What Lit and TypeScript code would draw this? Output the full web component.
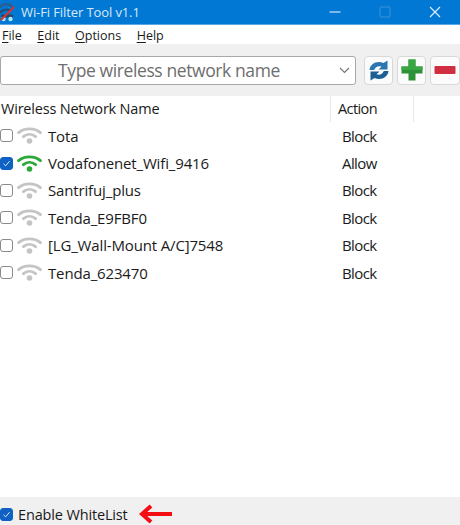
import { LitElement, html, css, svg } from "lit";
import { customElement } from "lit/decorators.js";

const wifi = (color: string) => svg`<svg class="wifi" width="25" height="17" viewBox="0 0 25 17" fill="none" stroke="${color}" stroke-linecap="round">
  <path d="M1.6 5.6C7.5 0.6 17.5 0.6 23.4 5.6" stroke-width="2.9"/>
  <path d="M6.4 9.6C10 6.6 15 6.6 18.6 9.6" stroke-width="2.9"/>
  <circle cx="12.5" cy="14" r="2.8" fill="${color}" stroke="none"/>
</svg>`;

const rows = [
  ["Tota", "Block", false],
  ["Vodafonenet_Wifi_9416", "Allow", true],
  ["Santrifuj_plus", "Block", false],
  ["Tenda_E9FBF0", "Block", false],
  ["[LG_Wall-Mount A/C]7548", "Block", false],
  ["Tenda_623470", "Block", false],
] as const;

@customElement("app-root")
export class AppRoot extends LitElement {
  static styles = css`
    :host { display: flex; flex-direction: column; width: 460px; height: 525px; font-family: "Open Sans", "Noto Sans", sans-serif; font-size: 14px; color: #1a1a1a; background: #fff; overflow: hidden; letter-spacing: -0.2px; }
    .title { height: 25px; box-sizing: border-box; flex: none; background: #0078d4; color: #d8e9f7; display: flex; align-items: center; font-size: 13px; border-bottom: 1px solid #5ba7e3; letter-spacing: -0.1px; }
    .logo { margin: 0 6px 0 0; flex: none; }
    .title .name { flex: 1; }
    .winbtn { width: 50px; display: flex; justify-content: center; flex: none; }
    .menu { height: 19px; padding-top: 1px; box-sizing: border-box; flex: none; display: flex; align-items: center; gap: 15.5px; padding-left: 2px; font-size: 12.5px; background: #fff; letter-spacing: 0; }
    .menu u { text-underline-offset: 2px; }
    .toolbar { height: 52px; flex: none; background: #f0f0f0; display: flex; align-items: center; gap: 4px; }
    .combo { width: 357px; height: 29px; box-sizing: border-box; margin-right: 4px; background: #fff; border: 1px solid #a8a8a8; border-radius: 3px; display: flex; align-items: center; font-size: 17.5px; color: #6e6e6e; letter-spacing: -0.4px; }
    .combo span { flex: 1; text-align: center; padding-right: 2px; }
    .combo svg { margin-right: 5px; }
    .tool { width: 30px; height: 29px; box-sizing: border-box; flex: none; background: #fbfbfb; border: 1px solid #d8d8d8; border-radius: 4px; display: flex; align-items: center; justify-content: center; }
    .tool.first { width: 29px; }
    .tool.second { width: 29px; }
    .list { flex: 1; display: flex; flex-direction: column; background: #fff; }
    .head { display: grid; grid-template-columns: 331px 83px; height: 26px; align-items: center; font-size: 14.5px; }
    .head div { height: 100%; padding-bottom: 2px; display: flex; align-items: center; box-sizing: border-box; }
    .head .c1 { padding-left: 1px; border-right: 1px solid #e6e6e6; }
    .head .c2 { padding-left: 7px; border-right: 1px solid #e6e6e6; letter-spacing: -0.6px; }
    .row { display: grid; grid-template-columns: 342px 1fr; height: 27.4px; align-items: center; font-size: 15px; letter-spacing: -0.15px; }
    .cell { display: flex; align-items: center; }
    .act { letter-spacing: -0.6px; }
    .cb { width: 13px; height: 13px; box-sizing: border-box; border: 1px solid #8a8a8a; border-radius: 3px; background: #fff; flex: none; display: flex; align-items: center; justify-content: center; }
    .cb.on { background: #0f62c4; border-color: #0f62c4; }
    .wifi { margin: 0 6px 0 4px; flex: none; }
    .foot { height: 28px; padding-top: 6px; box-sizing: border-box; flex: none; background: #f0f0f0; display: flex; align-items: center; font-size: 14.5px; letter-spacing: -0.15px; }
    .foot .cb { margin-right: 5px; }
    .foot svg.arrow { margin-left: 10px; }
  `;

  private check() {
    return html`<svg width="9" height="9" viewBox="0 0 9 9" fill="none" stroke="#dfeafa" stroke-width="1"><path d="M1.5 4.8L3.6 6.8L7.6 2.2"/></svg>`;
  }

  render() {
    return html`
      <div class="title">
        <svg class="logo" width="15" height="20" viewBox="0 0 15 20" fill="none">
          <path d="M-1 6C3 1 9 1 13 5" stroke="#2f5c8c" stroke-width="2.2"/>
          <path d="M0 11C3 7 8 7 11 9" stroke="#274a70" stroke-width="2.2"/>
          <path d="M1 14H13" stroke="#28466a" stroke-width="3"/>
          <circle cx="3.5" cy="17" r="2.2" fill="#a9ecf5"/>
          <circle cx="10.5" cy="17" r="2.2" fill="#a9ecf5"/>
          <path d="M1 18L14 5" stroke="#d9342b" stroke-width="2"/>
        </svg>
        <span class="name">Wi-Fi Filter Tool v1.1</span>
        <span class="winbtn"><svg width="12" height="12" viewBox="0 0 12 12"><path d="M0.5 6H11.5" stroke="#cfe4f6" stroke-width="1.2"/></svg></span>
        <span class="winbtn"><svg width="12" height="12" viewBox="0 0 12 12" fill="none"><rect x="1" y="1" width="10" height="10" rx="1" stroke="#3f96dd"/></svg></span>
        <span class="winbtn"><svg width="12" height="12" viewBox="0 0 12 12"><path d="M1 1L11 11M11 1L1 11" stroke="#e4f0fa" stroke-width="1.1"/></svg></span>
      </div>
      <div class="menu">
        <span><u>F</u>ile</span><span><u>E</u>dit</span><span><u>O</u>ptions</span><span><u>H</u>elp</span>
      </div>
      <div class="toolbar">
        <div class="combo"><span>Type wireless network name</span>
          <svg width="11" height="7" viewBox="0 0 11 7" fill="none"><path d="M1 1L5.5 5.5L10 1" stroke="#777" stroke-width="1.2"/></svg>
        </div>
        <div class="tool first">
          <svg width="22" height="23" viewBox="0 0 22 23">
            <path d="M1.5 11C2 5 9 1 15.5 4L19.5 1.5V10.5H10.5L13.5 7.8C10 6.6 7.5 8 6.2 11Z" fill="#2a76b0"/>
            <path d="M20.5 12C20 18 13 22 6.5 19L2.5 21.5V12.5H11.5L8.5 15.2C12 16.4 14.5 15 15.8 12Z" fill="#1c5f95"/>
          </svg>
        </div>
        <div class="tool second">
          <svg width="22" height="22" viewBox="0 0 22 22"><path d="M7.5 0.5H14.5V7.5H21.5V14.5H14.5V21.5H7.5V14.5H0.5V7.5H7.5Z" fill="#2c9137"/><path d="M7.5 0.5H14.5V7.5H21.5V11H0.5V7.5H7.5Z" fill="#3aa543"/></svg>
        </div>
        <div class="tool">
          <svg width="22" height="8" viewBox="0 0 22 8"><rect x="0.5" y="0" width="21" height="8" rx="1" fill="#d02f43"/></svg>
        </div>
      </div>
      <div class="list">
        <div class="head"><div class="c1">Wireless Network Name</div><div class="c2">Action</div></div>
        ${rows.map(([name, action, on]) => html`
          <div class="row">
            <div class="cell">
              <span class="cb ${on ? "on" : ""}">${on ? this.check() : ""}</span>
              ${wifi(on ? "#2aa838" : "#c4c4c4")}
              <span>${name}</span>
            </div>
            <div class="act">${action}</div>
          </div>`)}
      </div>
      <div class="foot">
        <span class="cb on">${this.check()}</span>
        <span>Enable WhiteList</span>
        <svg class="arrow" width="34" height="20" viewBox="0 0 34 20" fill="none" stroke="#f50d14" stroke-width="4">
          <path d="M4 10H34"/><path d="M13 2L4 10L13 18"/>
        </svg>
      </div>
    `;
  }
}
